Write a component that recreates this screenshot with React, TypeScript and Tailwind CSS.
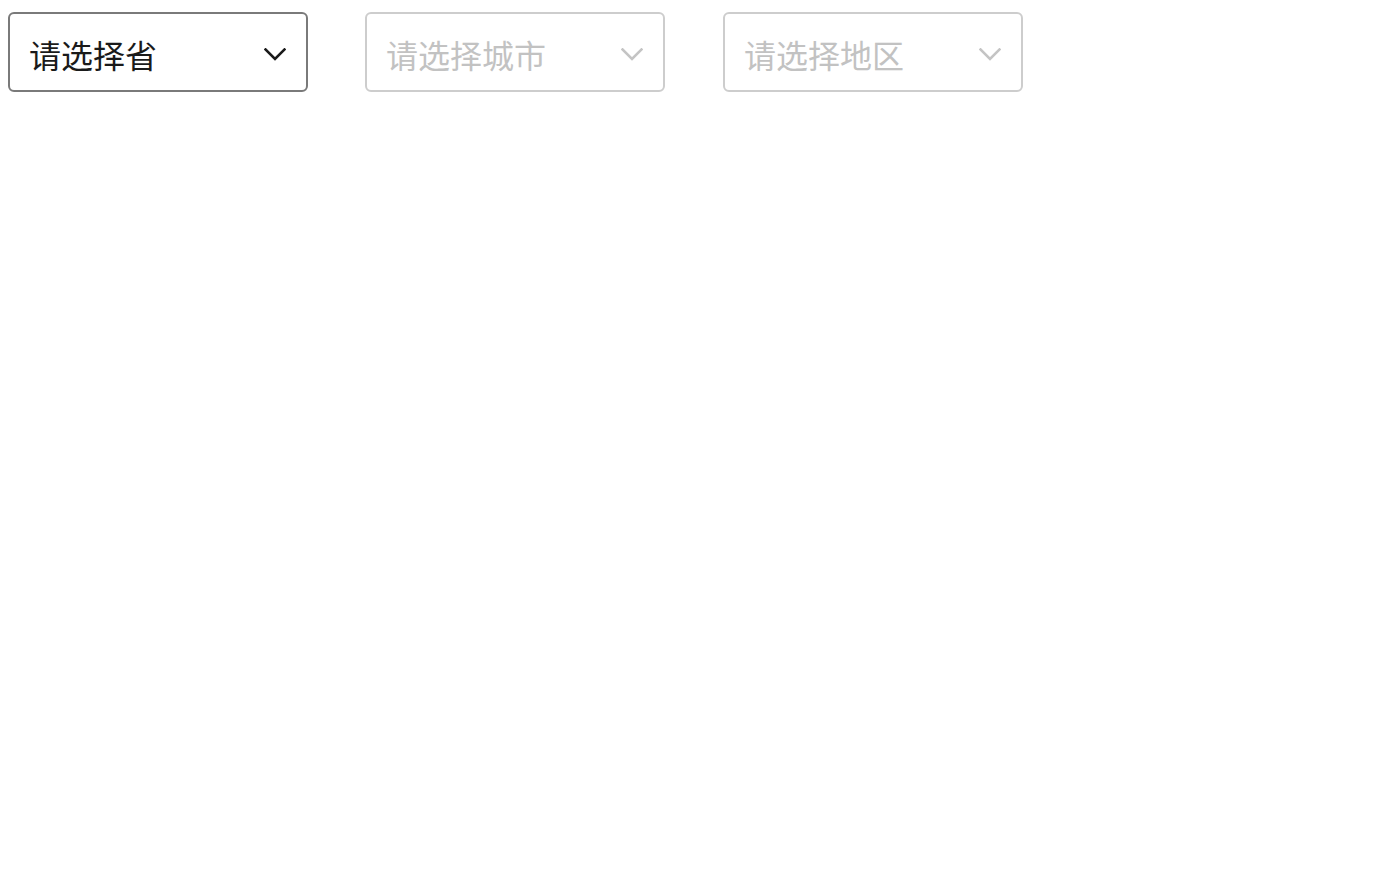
import type React from "react";

interface PickerProps {
	label: string;
	disabled?: boolean;
	className?: string;
}

const Chevron: React.FC<{ disabled?: boolean }> = ({ disabled }) => (
	<svg
		xmlns="http://www.w3.org/2000/svg"
		viewBox="0 0 22 13"
		className={`w-[22px] h-[13px] ${disabled ? "text-[#c4c4c4]" : "text-[#1a1a1a]"}`}
		fill="none"
		stroke="currentColor"
	>
		<path d="M1.5 1.5l9.5 9.5 9.5-9.5" strokeWidth={2.6} strokeLinecap="square" />
	</svg>
);

const Picker: React.FC<PickerProps> = ({ label, disabled, className = "" }) => (
	<div
		className={`w-[300px] h-[80px] rounded-[6px] border-2 bg-white flex items-center justify-between pl-[19px] pr-[20px] ${
			disabled ? "border-[#cdcdcd] text-[#c2c2c2]" : "border-[#7a7a7a] text-[#1a1a1a]"
		} ${className}`}
	>
		<span className="text-[32px] leading-none pt-[8px]">{label}</span>
		<span className="pt-[4px]">
			<Chevron disabled={disabled} />
		</span>
	</div>
);

export default function App() {
	return (
		<div
			className="min-h-screen bg-white pt-[12px] pl-[8px] flex items-start"
			style={{ fontFamily: '"Noto Sans", "Noto Sans CJK SC", sans-serif' }}
		>
			<Picker label="请选择省" />
			<Picker label="请选择城市" disabled className="ml-[57px]" />
			<Picker label="请选择地区" disabled className="ml-[58px]" />
		</div>
	);
}
